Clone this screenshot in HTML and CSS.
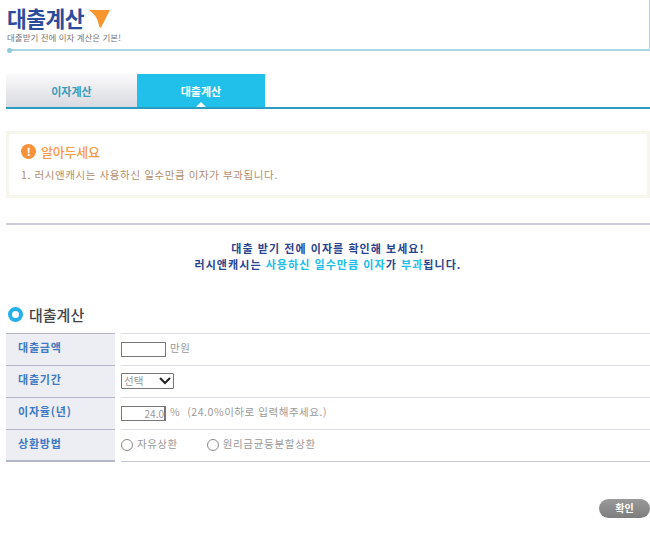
FILE: index.html
```html
<!DOCTYPE html>
<html lang="ko">
<head>
<meta charset="utf-8">
<title>대출계산</title>
<link rel="stylesheet" href="styles.css">
</head>
<body>
<header class="head">
  <div class="head-title">
    <h1>대출계산</h1>
    <svg class="head-arrow" width="21" height="18" viewBox="0 0 21 18"><path d="M0 0H21L12 17.500Q11 18 10.500 17L9 12Q8 6 0 0Z" fill="#f7952f"/></svg>
  </div>
  <p class="head-sub">대출받기 전에 이자 계산은 기본!</p>
  <span class="head-dot"></span>
</header>

<nav class="tabs">
  <a class="tab">이자계산</a>
  <a class="tab tab-on">대출계산</a>
</nav>

<section class="notice">
  <h2><span class="bang">!</span>알아두세요</h2>
  <p>1. 러시앤캐시는 사용하신 일수만큼 이자가 부과됩니다.</p>
</section>

<section class="lead">
  <p>대출 받기 전에 이자를 확인해 보세요!</p>
  <p>러시앤캐시는 <em>사용하신 일수만큼 이자</em>가 <em>부과</em>됩니다.</p>
</section>

<h3 class="sec"><span class="ring"></span>대출계산</h3>

<div class="form">
  <div class="row">
    <div class="lbl">대출금액</div>
    <div class="val"><span class="inp"></span><span class="txt">만원</span></div>
  </div>
  <div class="row">
    <div class="lbl">대출기간</div>
    <div class="val">
      <span class="sel">선택<svg width="14" height="9" viewBox="0 0 14 9"><path d="M2 2L7 7L12 2" fill="none" stroke="#222" stroke-width="2"/></svg></span>
    </div>
  </div>
  <div class="row">
    <div class="lbl">이자율(년)</div>
    <div class="val"><span class="inp inp-num">24.0</span><span class="txt txt-wide">%&nbsp; (24.0%이하로 입력해주세요.)</span></div>
  </div>
  <div class="row">
    <div class="lbl">상환방법</div>
    <div class="val">
      <span class="radio"></span><span class="txt opt">자유상환</span>
      <span class="radio"></span><span class="txt txt-long">원리금균등분할상환</span>
    </div>
  </div>
</div>

<div class="actions"><a class="btn">확인</a></div>
</body>
</html>
```
FILE: styles.css
```css
* { box-sizing: border-box; }
html, body { margin: 0; padding: 0; }
body {
  width: 650px;
  height: 541px;
  overflow: hidden;
  background: #fff;
  font-family: "Noto Sans CJK KR", "Liberation Sans", sans-serif;
  color: #888;
}
h1, h2, h3, p { margin: 0; }
em { font-style: normal; color: #20bde8; }

.head {
  position: relative;
  height: 51px;
  margin-left: 9px;
  padding-top: 7px;
  border-right: 1px solid #a9d6e6;
  border-bottom: 2px solid #a9d6e6;
}
.head-title { display: flex; align-items: flex-start; margin-left: -2px; gap: 5px; height: 24px; }
.head-title h1 {
  font-size: 21.500px;
  line-height: 22px;
  font-weight: 700;
  color: #2d4b9b;
  letter-spacing: -0.5px;
}
.head-arrow { margin-top: 3px; }
.head-sub {
  margin: 1px 0 0 -2px;
  font-size: 8.500px;
  line-height: 11px;
  color: #777;
}
.head-dot {
  position: absolute;
  left: -2px;
  bottom: -3.500px;
  width: 5px;
  height: 5px;
  border-radius: 50%;
  background: #8fcbdd;
}

.tabs {
  display: flex;
  margin: 23px 0 0 6px;
  height: 35px;
  border-bottom: 2px solid #2a9cc1;
}
.tab {
  width: 131px;
  height: 33px;
  font-size: 11px;
  line-height: 34px;
  font-weight: 700;
  text-align: center;
  color: #3d9cb8;
  background: linear-gradient(#fafafb, #d9dae1);
}
.tab-on {
  position: relative;
  width: 128px;
  color: #fff;
  background: #20c0ea;
}
.tab-on::after {
  content: "";
  position: absolute;
  left: 59px;
  bottom: 0;
  border-left: 5px solid transparent;
  border-right: 5px solid transparent;
  border-bottom: 5px solid #fff;
}

.notice {
  margin: 22px 0 0 6px;
  height: 67px;
  padding: 8px 0 0 12px;
  border: 3px solid #f6f6ec;
}
.notice h2 {
  display: flex;
  align-items: center;
  gap: 5px;
  height: 18px;
  font-size: 13px;
  font-weight: 500;
  letter-spacing: -0.2px;
  color: #f99a45;
}
.bang {
  width: 15px;
  height: 15px;
  border-radius: 50%;
  background: #f7923a;
  color: #fff;
  font-size: 11px;
  line-height: 15px;
  font-weight: 900;
  text-align: center;
}
.notice p {
  margin-top: 7px;
  font-size: 10.500px;
  line-height: 16px;
  letter-spacing: 0.6px;
  color: #b08d6e;
}

.lead {
  margin: 25px 0 0 6px;
  padding-top: 16px;
  border-top: 2px solid #cccdd9;
  text-align: center;
  font-size: 11px;
  line-height: 15.500px;
  font-weight: 700;
  letter-spacing: 1.05px;
  color: #2a4590;
}

.sec {
  display: flex;
  align-items: center;
  gap: 6px;
  margin: 32px 0 0 8px;
  height: 20px;
  font-size: 15px;
  font-weight: 500;
  color: #444;
}
.ring {
  width: 15px;
  height: 15px;
  border: 4px solid #26b1e6;
  border-radius: 50%;
}

.form { margin: 9px 0 0 6px; }
.row { display: flex; height: 32px; }
.lbl {
  width: 109px;
  padding-left: 12px;
  border-top: 1px solid #b4b8c6;
  background: #eceef4;
  font-size: 11px;
  line-height: 26px;
  font-weight: 700;
  letter-spacing: 0.8px;
  color: #3f79c4;
}
.row:last-child .lbl, .row:last-child .val { height: 33px; border-bottom: 1px solid #c4c6d2; }
.row:last-child .lbl { border-bottom: 2px solid #b4b8c6; }
.val {
  flex: 1;
  display: flex;
  align-items: center;
  margin-left: 6px;
  padding-bottom: 1px;
  border-top: 1px solid #dcdde6;
  font-size: 10.500px;
  color: #999;
}
.inp {
  width: 45px;
  height: 15px;
  border: 1px solid #777;
  font-size: 10px;
  line-height: 13px;
  text-align: right;
  color: #999;
  background: #fff;
}
.inp-num { border-right-width: 2px; }
.txt { margin-left: 4px; margin-top: -4px; letter-spacing: 0.5px; }
.txt-wide { letter-spacing: 0.55px; }
.txt-long { letter-spacing: 0.7px; }
.sel {
  display: flex;
  align-items: center;
  justify-content: space-between;
  width: 53px;
  height: 16px;
  padding: 0 1px 2px 2px;
  border: 1px solid #777;
  border-radius: 1px;
  font-size: 10.500px;
  line-height: 13px;
  color: #999;
}
.radio {
  width: 12px;
  height: 12px;
  border: 1px solid #888;
  border-radius: 50%;
  background: #fff;
}
.opt { margin-right: 29px; }

.actions { display: flex; justify-content: flex-end; margin-top: 38px; }
.btn {
  width: 51px;
  height: 19px;
  border-radius: 10px;
  background: linear-gradient(#9a9a9a, #7d7d7d);
  color: #fff;
  font-size: 10px;
  line-height: 18px;
  font-weight: 700;
  text-align: center;
}
```
